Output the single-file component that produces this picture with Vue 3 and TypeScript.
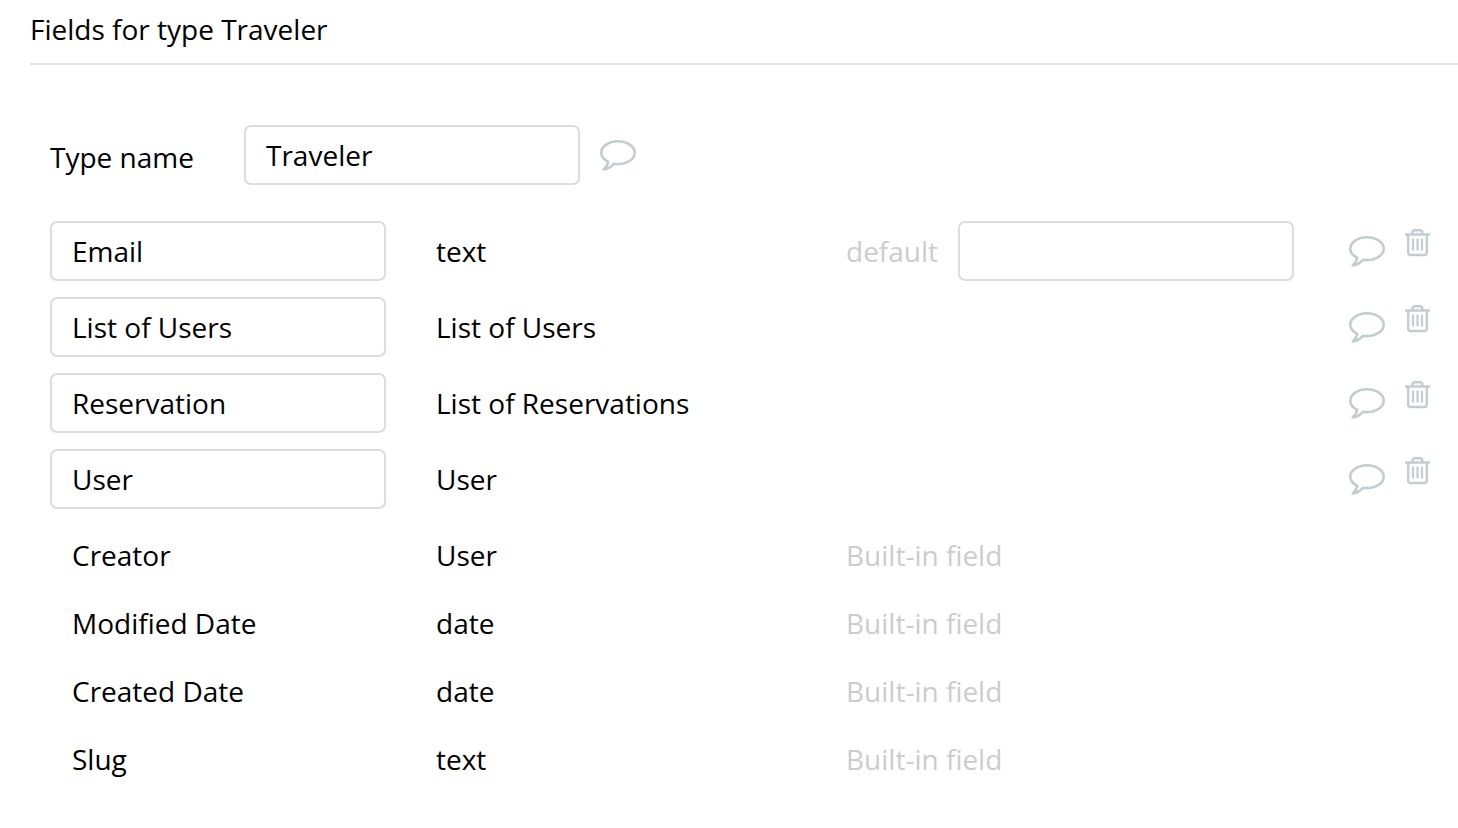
<script setup lang="ts">
import { ref } from 'vue'

interface CustomField {
  id: string
  name: string
  type: string
  hasDefault: boolean
  defaultValue: string
}

interface BuiltInField {
  name: string
  type: string
}

const bubblePath =
  'M8.2 21.7C4 19.7 1.3 16.400 1.3 12.700C1.3 6.400 8.800 1.300 18 1.300S34.700 6.400 34.700 12.700S27.200 24.100 18 24.100C16.600 24.100 15.300 24 14 23.800C11.500 26.500 8 29.100 3.700 29.500C6 27.500 7.700 24.700 8.200 21.700Z'

const typeName = ref<string>('Traveler')

const fields = ref<CustomField[]>([
  { id: 'email', name: 'Email', type: 'text', hasDefault: true, defaultValue: '' },
  { id: 'users', name: 'List of Users', type: 'List of Users', hasDefault: false, defaultValue: '' },
  { id: 'reservation', name: 'Reservation', type: 'List of Reservations', hasDefault: false, defaultValue: '' },
  { id: 'user', name: 'User', type: 'User', hasDefault: false, defaultValue: '' },
])

const builtIns: BuiltInField[] = [
  { name: 'Creator', type: 'User' },
  { name: 'Modified Date', type: 'date' },
  { name: 'Created Date', type: 'date' },
  { name: 'Slug', type: 'text' },
]

function removeField(id: string): void {
  fields.value = fields.value.filter((field) => field.id !== id)
}
</script>

<template>
  <main class="panel">
    <h1 class="title">Fields for type {{ typeName }}</h1>

    <div class="type-row">
      <label class="type-label" for="type-name">Type name</label>
      <input id="type-name" v-model="typeName" class="box" type="text" />
      <button class="icon-button" type="button" aria-label="Comment on type">
        <svg class="bubble" viewBox="0 0 36 32" aria-hidden="true">
          <path :d="bubblePath" />
        </svg>
      </button>
    </div>

    <table class="fields">
      <colgroup>
        <col class="col-name" />
        <col class="col-type" />
        <col />
        <col class="col-actions" />
      </colgroup>
      <tbody>
        <tr v-for="field in fields" :key="field.id" class="custom">
          <td>
            <input v-model="field.name" class="box" type="text" :aria-label="`Name of field ${field.id}`" />
          </td>
          <td>{{ field.type }}</td>
          <td>
            <div v-if="field.hasDefault" class="default">
              <label class="muted" :for="`default-${field.id}`">default</label>
              <input :id="`default-${field.id}`" v-model="field.defaultValue" class="box" type="text" />
            </div>
          </td>
          <td>
            <div class="actions">
              <button class="icon-button" type="button" :aria-label="`Comment on ${field.name}`">
                <svg class="bubble" viewBox="0 0 36 32" aria-hidden="true">
                  <path :d="bubblePath" />
                </svg>
              </button>
              <button class="icon-button" type="button" :aria-label="`Delete ${field.name}`" @click="removeField(field.id)">
                <svg class="trash" viewBox="0 0 26 28" aria-hidden="true">
                  <path d="M0 5.500H25M7.500 5V3.700Q7.500 1.300 9.900 1.300H15Q17.400 1.300 17.400 3.700V5M3.200 5.500V23.500Q3.200 26 5.700 26H19.300Q21.800 26 21.800 23.500V5.500" />
                  <path class="slats" d="M8 9.500V21.500M12.500 9.500V21.500M17 9.500V21.500" />
                </svg>
              </button>
            </div>
          </td>
        </tr>
      </tbody>
      <tbody>
        <tr v-for="field in builtIns" :key="field.name" class="built-in">
          <td class="built-in-name">{{ field.name }}</td>
          <td>{{ field.type }}</td>
          <td class="muted">Built-in field</td>
          <td></td>
        </tr>
      </tbody>
    </table>
  </main>
</template>

<style>
body {
  margin: 0;
  background: #fff;
}
</style>

<style scoped>
.panel {
  box-sizing: border-box;
  padding-left: 30px;
  color: #000;
  font-family: 'Open Sans', 'Noto Sans', sans-serif;
  font-size: 28px;
  line-height: 40px;
}

.title {
  margin: 0;
  padding: 9px 0 14px;
  border-bottom: 2px solid #e3e3e3;
  font-size: inherit;
  font-weight: 400;
}

.type-row {
  display: flex;
  align-items: center;
  padding: 60px 28px 0 20px;
}

.type-label {
  box-sizing: border-box;
  width: 194px;
  padding-top: 4px;
}

.box {
  box-sizing: border-box;
  width: 336px;
  height: 60px;
  padding: 0 20px;
  border: 2px solid #dcdcdc;
  border-radius: 7px;
  background: #fff;
  color: inherit;
  font: inherit;
  outline: none;
}

.icon-button {
  display: block;
  padding: 0;
  border: 0;
  background: none;
  cursor: pointer;
}

.type-row .icon-button {
  margin-left: 20px;
  padding-top: 2px;
}

.bubble,
.trash {
  display: block;
  fill: none;
  stroke: #c3cdd0;
  stroke-width: 2.6;
  stroke-linejoin: round;
}

.bubble {
  width: 36px;
  height: 32px;
}

.trash {
  width: 26px;
  height: 28px;
  stroke-width: 2.4;
}

.slats {
  stroke-width: 2.2;
}

.fields {
  width: calc(100% - 47px);
  margin: 28px 27px 0 20px;
  border-collapse: collapse;
  table-layout: fixed;
}

.col-name {
  width: 386px;
}

.col-type {
  width: 410px;
}

.col-actions {
  width: 82px;
}

.fields td {
  padding: 0;
  vertical-align: middle;
}

.custom td {
  height: 76px;
}

.custom .box {
  display: block;
}

.built-in td {
  height: 68px;
}

.built-in:first-child td {
  padding-top: 4px;
}

.fields .built-in-name {
  padding-left: 22px;
}

.muted {
  color: #ccc;
}

.default {
  display: flex;
  align-items: center;
  gap: 20px;
}

.actions {
  display: flex;
  align-items: flex-start;
  justify-content: space-between;
  padding-bottom: 6px;
}

.actions .bubble {
  margin-top: 7px;
}
</style>
